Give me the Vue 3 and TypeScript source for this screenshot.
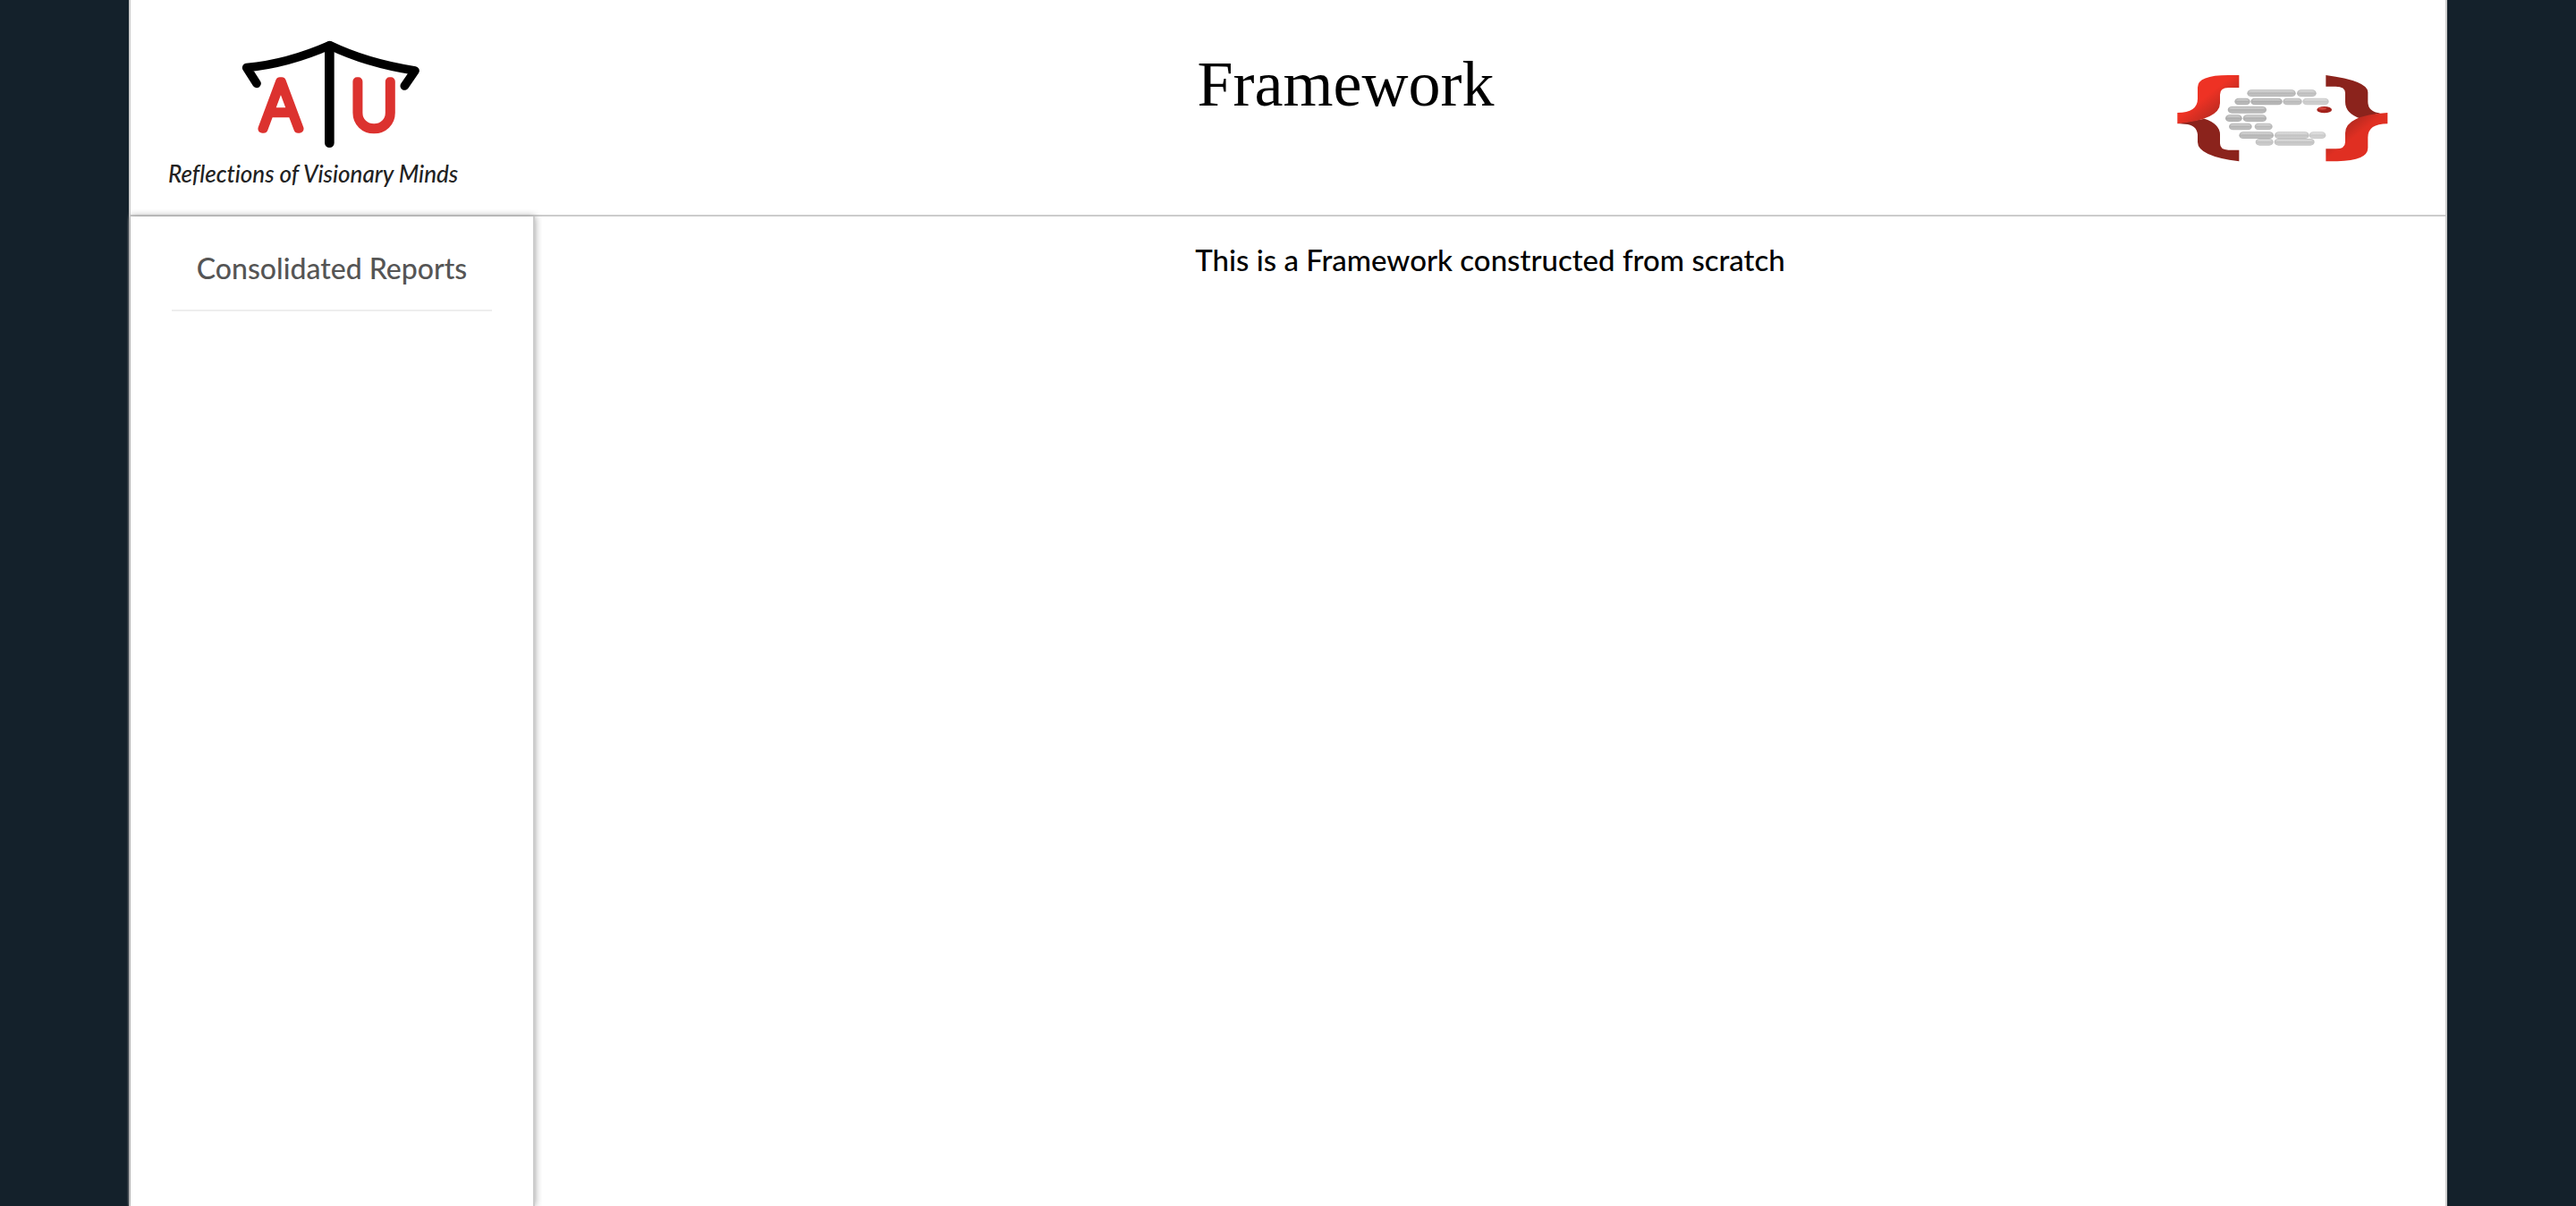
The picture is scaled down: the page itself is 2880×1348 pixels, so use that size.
<script setup lang="ts">
interface MenuItem {
  label: string
  href: string
}

interface Pill {
  x: number
  y: number
  w: number
  tone: string
}

const menu: MenuItem[] = [{ label: 'Consolidated Reports', href: '#reports' }]

const pills: Pill[] = [
  { x: 278, y: 90, w: 163, tone: '#b6b6b6' },
  { x: 445, y: 90, w: 65, tone: '#bcbcbc' },
  { x: 236, y: 118, w: 52, tone: '#b0b0b0' },
  { x: 290, y: 118, w: 106, tone: '#aeaeae' },
  { x: 398, y: 118, w: 64, tone: '#bababa' },
  { x: 464, y: 118, w: 88, tone: '#c8c8c8' },
  { x: 213, y: 146, w: 130, tone: '#b0b0b0' },
  { x: 205, y: 174, w: 56, tone: '#acacac' },
  { x: 264, y: 174, w: 79, tone: '#b0b0b0' },
  { x: 217, y: 202, w: 77, tone: '#b4b4b4' },
  { x: 303, y: 202, w: 60, tone: '#bababa' },
  { x: 251, y: 231, w: 116, tone: '#b4b4b4' },
  { x: 370, y: 231, w: 116, tone: '#c2c2c2' },
  { x: 486, y: 231, w: 56, tone: '#cacaca' },
  { x: 306, y: 254, w: 60, tone: '#c2c2c2' },
  { x: 369, y: 254, w: 135, tone: '#c2c2c2' },
]
</script>

<template>
  <div class="page">
    <header class="header">
      <div class="brand">
        <svg class="brand-mark" viewBox="420 70 600 366" role="img" aria-label="ATU">
          <g class="letters">
            <text x="552" y="370" text-anchor="middle">A</text>
            <text x="864" y="370" text-anchor="middle">U</text>
          </g>
          <g fill="none" stroke="#000" stroke-linecap="round" stroke-linejoin="round">
            <path d="M715 92V417" stroke-width="32" />
            <path d="M471 218L437 165Q575 152 716 90Q840 150 1002 175L967 226" stroke-width="29" />
          </g>
        </svg>
        <p class="tagline">Reflections of Visionary Minds</p>
      </div>
      <h1 class="title">Framework</h1>
      <svg class="code-logo" viewBox="43 38 708 294" role="img" aria-label="Code">
        <defs>
          <linearGradient id="redLeft" x1="0" y1="0" x2="1" y2="1">
            <stop offset="0.45" stop-color="#ee3224" />
            <stop offset="0.85" stop-color="#a3271f" />
          </linearGradient>
          <linearGradient id="redRight" x1="0" y1="0" x2="1" y2="1">
            <stop offset="0.2" stop-color="#a3271f" />
            <stop offset="0.48" stop-color="#e02f22" />
          </linearGradient>
          <linearGradient id="shine" x1="0" y1="0" x2="0" y2="1">
            <stop offset="0" stop-color="#fff" stop-opacity="0.5" />
            <stop offset="0.5" stop-color="#fff" stop-opacity="0" />
            <stop offset="1" stop-color="#fff" stop-opacity="0.2" />
          </linearGradient>
        </defs>
        <path fill="#8b231c" d="M44 203L135 187Q187 205 187 240V270Q187 292 215 292H251V330Q112 312 112 265V240Q108 207 70 205Z" />
        <path fill="url(#redLeft)" d="M251 41H215Q112 41 112 82V120Q112 167 44 167V204Q187 190 187 135V106Q187 83 215 83H251Z" />
        <path fill="#8b231c" d="M542 41Q683 60 683 98V130Q683 164 725 168L660 187Q607 170 607 130V101Q607 79 575 79H542Z" />
        <path fill="url(#redRight)" d="M542 330H580Q683 328 683 285V250Q683 204 749 204V167Q607 176 607 235V265Q607 288 575 288H542Z" />
        <g v-for="pill in pills" :key="`${pill.x}-${pill.y}`">
          <rect :x="pill.x" :y="pill.y" :width="pill.w" height="23" rx="14" :fill="pill.tone" />
          <rect :x="pill.x + 4" :y="pill.y + 3" :width="pill.w - 8" height="17" rx="10" fill="url(#shine)" />
        </g>
        <ellipse cx="537" cy="157" rx="25" ry="11" fill="#a3221c" />
        <ellipse cx="530" cy="153" rx="14" ry="4" fill="#d4453d" />
      </svg>
    </header>

    <div class="body">
      <nav class="sidebar">
        <ul class="menu">
          <li v-for="item in menu" :key="item.label">
            <a :href="item.href">{{ item.label }}</a>
          </li>
        </ul>
      </nav>
      <main class="content">
        <p>This is a Framework constructed from scratch</p>
      </main>
    </div>
  </div>
</template>

<style>
body {
  margin: 0;
  background: #14212b;
}
</style>

<style scoped>
.page {
  box-sizing: border-box;
  display: flex;
  flex-direction: column;
  width: 90%;
  min-height: 100vh;
  margin: 0 auto;
  border: solid #ccc;
  border-width: 0 2px;
  background: #fff;
  color: #000;
  font-family: "Trebuchet MS", Lato, sans-serif;
  font-size: 32px;
  font-variant-ligatures: none;
  font-weight: 500;
  line-height: 40px;
}

.header {
  box-sizing: border-box;
  display: grid;
  grid-template-columns: 46% 1fr auto;
  align-items: start;
  min-height: 242px;
  border-bottom: 2px solid #ccc;
}

.brand {
  justify-self: start;
  padding: 44px 0 0 42px;
}

.brand-mark {
  display: block;
  width: 200px;
  height: 122px;
  margin-left: 82px;
}

.letters {
  font-family: Inter, sans-serif;
  font-size: 218px;
  font-weight: 100;
  fill: #dc322f;
  stroke: #dc322f;
  stroke-width: 28px;
  stroke-linejoin: round;
}

.tagline {
  margin: 12px 0 0;
  color: #222;
  font-size: 26px;
  font-style: italic;
  line-height: 32px;
}

.title {
  margin: 52px 0 0 2px;
  font-family: "Liberation Serif", serif;
  font-size: 72px;
  font-weight: 400;
  line-height: 84px;
}

.code-logo {
  width: 236px;
  height: 98px;
  margin: 83px 64px 0 0;
}

.body {
  display: flex;
  flex: 1;
}

.sidebar {
  box-sizing: border-box;
  width: 452px;
  padding: 24px 46px;
  border-right: 2px solid #ccc;
  box-shadow: 0 0 8px #999;
  clip-path: inset(-8px -8px 0 -4px);
}

.menu {
  margin: 0;
  padding: 0;
  list-style: none;
}

.menu a {
  display: block;
  padding: 14px 0 26px;
  border-bottom: 2px solid #eee;
  color: #555;
  text-align: center;
  text-decoration: none;
}

.content {
  flex: 1;
  padding: 28px 20px;
  font-size: 33px;
  text-align: center;
}

.content p {
  margin: 0;
}
</style>
